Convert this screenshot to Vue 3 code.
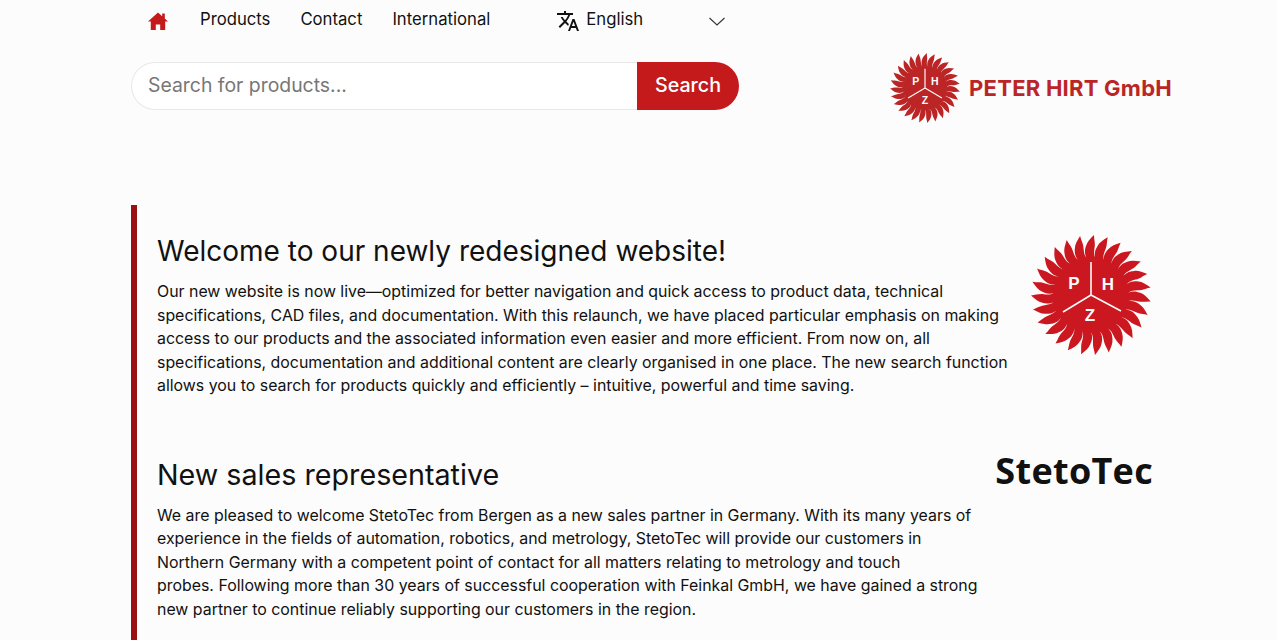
<template>
  <div class="page">
    <nav class="topnav">
      <a class="home-link" href="#">
        <svg width="20" height="18" viewBox="0 0 20 18"><path d="M10 0.5 0 9.5h2.8V18h5v-5.6h4.4V18h5V9.5H20L16.8 6.6V1.6h-2.6v2.7z" fill="#c41a1c" /></svg>
      </a>
      <a class="nav-link" href="#">Products</a>
      <a class="nav-link" href="#">Contact</a>
      <a class="nav-link" href="#">International</a>
      <div class="lang">
        <svg class="lang-icon" width="24" height="24" viewBox="0 0 24 24"><path d="M12.87 15.07l-2.54-2.51.03-.03A17.5 17.5 0 0 0 14.07 6H17V4h-7V2H8v2H1v2h11.17A15.7 15.7 0 0 1 9 11.35 15.6 15.6 0 0 1 6.69 8h-2a17.5 17.5 0 0 0 2.98 4.56l-5.09 5.02L4 19l5-5 3.11 3.11zM18.5 10h-2L12 22h2l1.12-3h4.75L21 22h2zm-2.62 7l1.62-4.33L19.12 17z" fill="#111" /></svg>
        <span>English</span>
        <svg class="chev" width="16" height="9" viewBox="0 0 16 9"><path d="M.5 1 8 8l7.5-7" fill="none" stroke="#333" stroke-width="1.1" /></svg>
      </div>
    </nav>

    <div class="search-row">
      <form class="search" @submit.prevent>
        <input class="search-input" type="text" placeholder="Search for products..." />
        <button class="search-btn">Search</button>
      </form>
      <div class="brand">
        <svg width="70" height="70" viewBox="-60 -60 120 120">
          <g fill="#bb2526">
            <path v-for="a in rays" :key="a" :d="rayPath" :transform="`rotate(${a})`" />
            <circle r="38" />
          </g>
          <path d="M0 0V-33M0 0 29 17M0 0-29 17" stroke="#fcfcfc" stroke-width="2" />
          <text class="mark" x="-16" y="-6" font-size="18">P</text>
          <text class="mark" x="17" y="-6" font-size="18">H</text>
          <text class="mark" x="0" y="28" font-size="18">Z</text>
        </svg>
        <span class="brand-name">PETER HIRT GmbH</span>
      </div>
    </div>

    <main class="news">
      <article class="item">
        <div class="copy first">
          <h2>Welcome to our newly redesigned website!</h2>
          <p>Our new website is now live—optimized for better navigation and quick access to product data, technical specifications, CAD files, and documentation. With this relaunch, we have placed particular emphasis on making access to our products and the associated information even easier and more efficient. From now on, all specifications, documentation and additional content are clearly organised in one place. The new search function allows you to search for products quickly and efficiently – intuitive, powerful and time saving.</p>
        </div>
        <svg class="sun" width="120" height="120" viewBox="-60 -60 120 120">
          <g fill="#cb1720">
            <path v-for="a in rays" :key="a" :d="rayPath" :transform="`rotate(${a})`" />
            <circle r="38" />
          </g>
          <path d="M0 0V-33M0 0 30 16M0 0-28 17" stroke="#fcfcfc" stroke-width="1.6" />
          <text class="mark" x="-17" y="-6" font-size="17">P</text>
          <text class="mark" x="17" y="-5" font-size="17">H</text>
          <text class="mark" x="-1" y="26" font-size="17">Z</text>
        </svg>
      </article>

      <article class="item second">
        <div class="copy">
          <h2>New sales representative</h2>
          <p>We are pleased to welcome StetoTec from Bergen as a new sales partner in Germany. With its many years of experience in the fields of automation, robotics, and metrology, StetoTec will provide our customers in Northern Germany with a competent point of contact for all matters relating to metrology and touch<br />probes. Following more than 30 years of successful cooperation with Feinkal GmbH, we have gained a strong new partner to continue reliably supporting our customers in the region.</p>
        </div>
        <div class="steto">StetoTec</div>
      </article>
    </main>
  </div>
</template>

<script setup>
const count = 27
const rays = Array.from({ length: count }, (_, i) => +(i * 360 / count).toFixed(2))
// one wavy flame, pointing up from the disc
const rayPath = 'M-4.5 -37C-7 -42 -6 -46 -5 -49C-4 -53 -1 -56 3 -60C3 -55 4.5 -52 3.5 -47C3 -43 2.5 -40 4.5 -37Z'
</script>

<style>
html, body { background: #fcfcfc; }
</style>

<style scoped>
.page {
  width: 1040px;
  margin-left: 131px;
  font-family: Inter, "Liberation Sans", sans-serif;
  color: #111;
  height: 640px;
  overflow: hidden;
}

.topnav {
  display: flex;
  align-items: center;
  height: 38px;
  font-size: 16.7px;
}
.home-link { display: flex; margin: 4px 32px 0 17px; }
.nav-link { color: #111; text-decoration: none; margin-right: 30px; }
.lang { display: flex; align-items: center; margin-left: 36px; width: 169px; }
.lang-icon { margin: 4px 6px 0 0; }
.chev { margin: 4px 0 0 auto; }

.search-row {
  display: flex;
  justify-content: space-between;
  align-items: flex-start;
  margin-top: 24px;
}
.search { display: flex; width: 608px; height: 48px; }
.search-input {
  flex: 1;
  min-width: 0;
  border: 1px solid #e8e8e8;
  border-right: 0;
  border-radius: 24px 0 0 24px;
  background: #fff;
  padding: 0 16px 2px;
  font: 19.4px Inter, "Liberation Sans", sans-serif;
  outline: none;
}
.search-input::placeholder { color: #777; }
.search-btn {
  width: 102px;
  border: 0;
  border-radius: 0 24px 24px 0;
  background: #c41a1c;
  color: #fff;
  padding: 0 0 2px;
  font: 500 19.7px Inter, "Liberation Sans", sans-serif;
}
.brand { display: flex; align-items: center; gap: 9px; margin: -9px -1px 0 0; }
.brand-name { color: #bb2526; font-size: 22px; font-weight: 700; letter-spacing: 0.25px; white-space: nowrap; }
.mark { fill: #fcfcfc; font-weight: 700; text-anchor: middle; font-family: "Liberation Sans", sans-serif; }

.news {
  margin-top: 82px;
  border-left: 6px solid #9b1012;
  padding-left: 20px;
  height: 480px;
}
.item { display: flex; align-items: flex-start; justify-content: space-between; padding-top: 28px; }
.second { padding-top: 59px; }
.copy { width: 822px; }
.copy.first { width: 855px; }
h2 { margin: 0 0 11px; font-size: 28px; font-weight: 400; line-height: 36px; }
.second h2 { font-size: 28.7px; }
p { margin: 0; font-size: 15.9px; line-height: 23.5px; }
.sun { margin: 2px 20px 0 0; }
.steto { margin: -9px 18px 0 0; font: 700 36px "Open Sans", sans-serif; letter-spacing: 0.3px; color: #111; line-height: 46px; }
</style>
